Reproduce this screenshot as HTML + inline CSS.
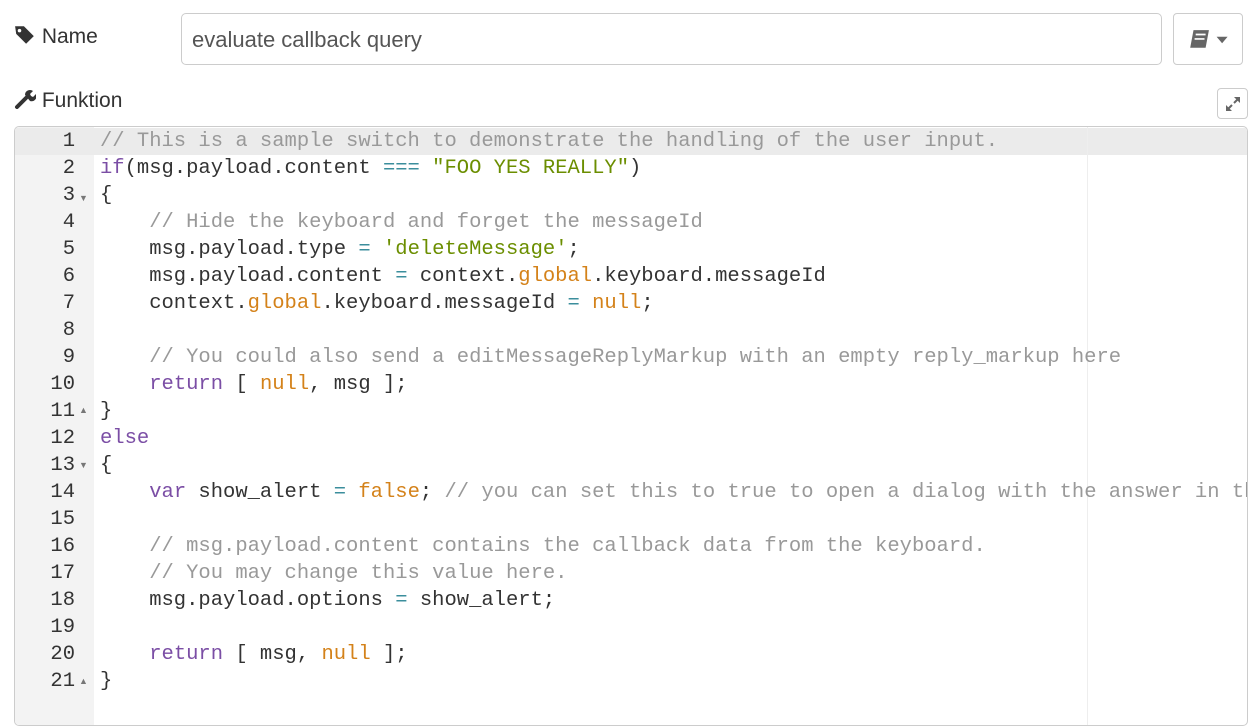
<!DOCTYPE html>
<html><head><meta charset="utf-8"><style>
body{margin:0;width:1259px;height:715px;background:#fff;overflow:hidden;font-family:"Liberation Sans",sans-serif;position:relative}
.lbl{position:absolute;font-size:21px;color:#333}
.inp{position:absolute;left:181px;top:13px;width:981px;height:52px;border:1px solid #ccc;border-radius:5px;box-sizing:border-box}
.inp span{position:absolute;left:10px;top:13px;font-size:22px;color:#555}
.btn{position:absolute;border:1px solid #ccc;border-radius:4px;box-sizing:border-box;background:#fff}
.ed{position:absolute;left:14px;top:126px;width:1234px;height:600px;border:1px solid #ccc;border-radius:5px;overflow:hidden;box-sizing:border-box}
.gut{position:absolute;left:0;top:0;width:79px;height:100%;background:#f3f3f3}
.hl{position:absolute;left:0;top:1px;width:100%;height:27px;background:#ebebeb}
.pm{position:absolute;left:1072px;top:0;width:1px;height:100%;background:#eee}
pre{margin:0;position:absolute;top:1px;font-family:"Liberation Mono",monospace;font-size:20.5px;line-height:27px;color:#333}
.ln{left:0;width:60px;text-align:right}
.code{left:85px}
.c{color:#999}.k{color:#7b4ea5}.o{color:#3b8e9c}.s{color:#6b8e00}.n{color:#d4821a}
.f{position:absolute;left:64px;font-size:9px;color:#777;line-height:10px}
</style></head><body>
<div class="lbl" style="left:14px;top:25px"><svg width="22" height="20" viewBox="0 0 20 18" style="vertical-align:-2px"><path d="M1 1h8l9 9-7 7-9-9z" fill="#333"/><circle cx="5" cy="5" r="1.6" fill="#fff"/></svg> Name</div>
<div class="inp"><span>evaluate callback query</span></div>
<div class="btn" style="left:1173px;top:13px;width:70px;height:52px"><svg width="44" height="22" viewBox="0 0 40 20" style="position:absolute;left:14px;top:15px"><path d="M5 1h14l-3 16H2z" fill="#666"/><path d="M7 5h9M6 9h9" stroke="#fff" stroke-width="1.5"/><path d="M26 7h10l-5 6z" fill="#666"/></svg></div>
<div class="lbl" style="left:14px;top:89px"><svg width="22" height="20" viewBox="0 0 22 20" style="vertical-align:-2px"><path d="M3 18l9-9" stroke="#333" stroke-width="4" stroke-linecap="round"/><path d="M11 6a5 5 0 0 1 8-4l-3 3 1 2 2 1 3-3a5 5 0 0 1-6 7z" fill="#333"/></svg> Funktion</div>
<div class="btn" style="left:1217px;top:88px;width:31px;height:31px"><svg width="16" height="16" viewBox="0 0 16 16" style="position:absolute;left:7px;top:7px"><path d="M2 14l5-5M9 7l5-5" stroke="#666" stroke-width="2"/><path d="M1 9v6h6zM15 7V1H9z" fill="#666"/></svg></div>
<div class="ed"><div class="gut"></div><div class="hl"></div><div class="pm"></div>
<pre class="ln">1
2
3
4
5
6
7
8
9
10
11
12
13
14
15
16
17
18
19
20
21</pre>
<span class="f" style="top:66px">▼</span>
<span class="f" style="top:278px">▲</span>
<span class="f" style="top:333px">▼</span>
<span class="f" style="top:549px">▲</span>
<pre class="code"><span class="c">// This is a sample switch to demonstrate the handling of the user input.</span>
<span class="k">if</span>(msg.payload.content <span class="o">===</span> <span class="s">"FOO YES REALLY"</span>)
{
    <span class="c">// Hide the keyboard and forget the messageId</span>
    msg.payload.type <span class="o">=</span> <span class="s">'deleteMessage'</span>;
    msg.payload.content <span class="o">=</span> context.<span class="n">global</span>.keyboard.messageId
    context.<span class="n">global</span>.keyboard.messageId <span class="o">=</span> <span class="n">null</span>;

    <span class="c">// You could also send a editMessageReplyMarkup with an empty reply_markup here</span>
    <span class="k">return</span> [ <span class="n">null</span>, msg ];
}
<span class="k">else</span>
{
    <span class="k">var</span> show_alert <span class="o">=</span> <span class="n">false</span>; <span class="c">// you can set this to true to open a dialog with the answer in the client</span>

    <span class="c">// msg.payload.content contains the callback data from the keyboard.</span>
    <span class="c">// You may change this value here.</span>
    msg.payload.options <span class="o">=</span> show_alert;

    <span class="k">return</span> [ msg, <span class="n">null</span> ];
}</pre>
</div>
</body></html>
